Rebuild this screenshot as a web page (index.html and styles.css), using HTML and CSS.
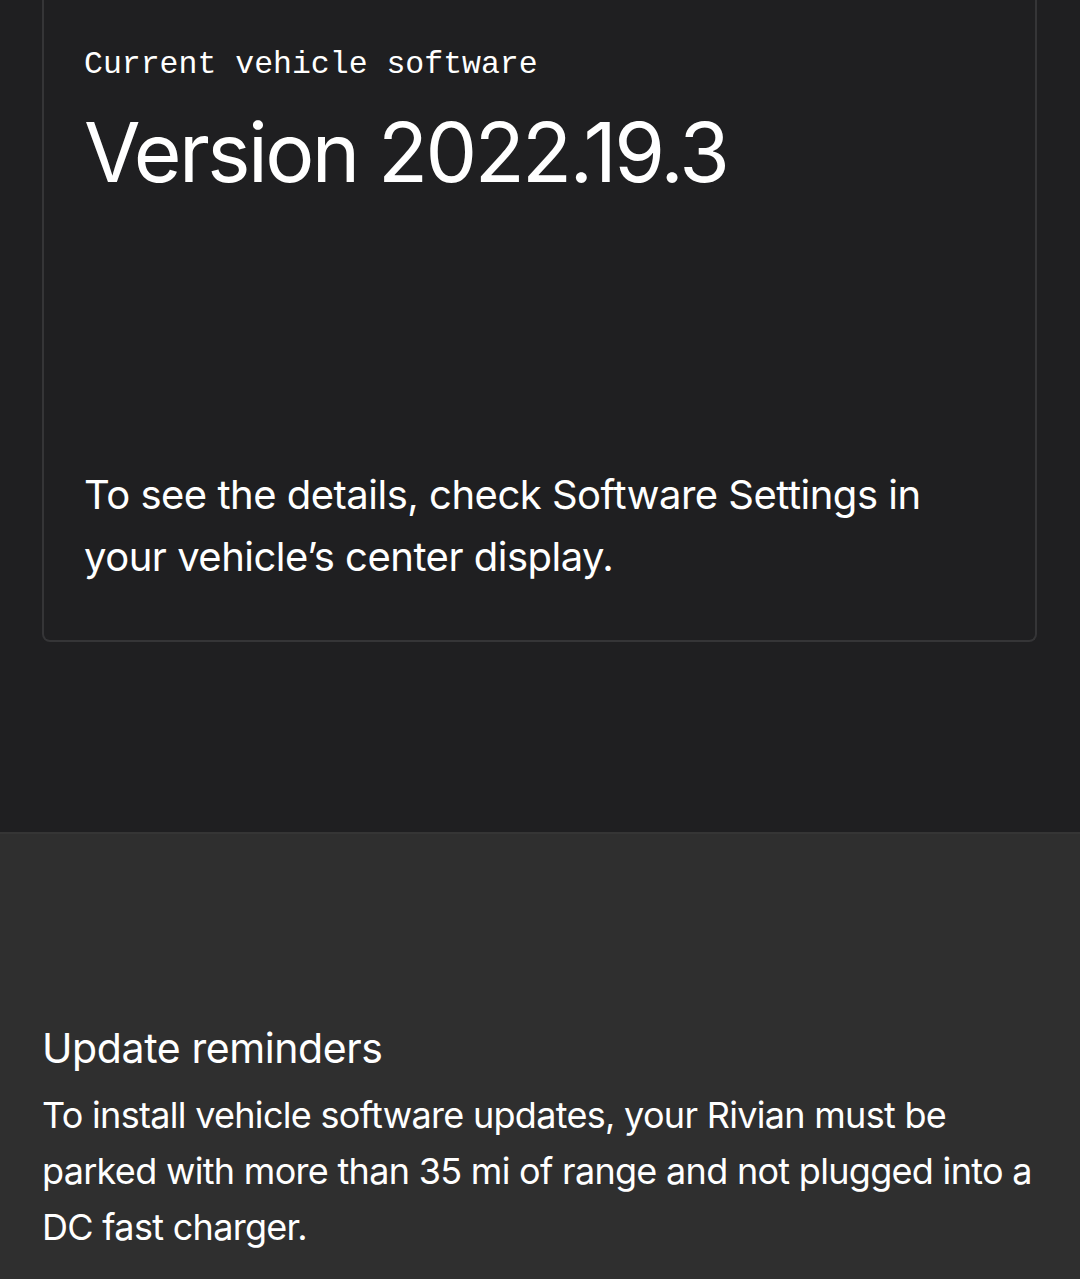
FILE: index.html
```html
<!DOCTYPE html>
<html>
    <head>
        <title>Vehicle software</title>
        <link rel="stylesheet" href="styles.css">
    </head>
    <body>
        <div class="top">
            <div class="card">
                <div class="label">Current vehicle software</div>
                <h1 class="version">Version 2022.19.3</h1>
                <p class="note">To see the details, check Software Settings in your vehicle’s center display.</p>
            </div>
        </div>
        <div class="bottom">
            <h2>Update reminders</h2>
            <p>To install vehicle software updates, your Rivian must be parked with more than 35 mi of range and not plugged into a DC fast charger.</p>
        </div>
    </body>
</html>
```
FILE: styles.css
```css
body {
    margin: 0;
    background: #1f1f21;
    color: #fff;
    font-family: Inter, "Liberation Sans", sans-serif;
}
.top {
    height: 832px;
    padding: 0 43px 0 42px;
    box-sizing: border-box;
}
.card {
    border: 2px solid #353537;
    border-top: none;
    border-radius: 0 0 8px 8px;
    padding: 43px 40px 40px 40px;
    height: 642px;
    box-sizing: border-box;
}
.label {
    font-family: "Liberation Mono", monospace;
    font-size: 31.5px;
    line-height: 40px;
    margin-top: 2px;
}
.version {
    font-size: 82px;
    font-weight: 400;
    letter-spacing: -2.6px;
    line-height: 100px;
    margin: 18px 0 0;
}
.note {
    font-size: 40px;
    line-height: 62px;
    letter-spacing: -0.5px;
    margin: 261px 0 0;
}
.bottom {
    background: #2f2f2f;
    border-top: 2px solid #353535;
    padding: 186px 42px 20px;
    min-height: 447px;
    box-sizing: border-box;
}
.bottom h2 {
    font-size: 41px;
    font-weight: 400;
    line-height: 56px;
    margin: 0;
    letter-spacing: -0.4px;
}
.bottom p {
    font-size: 36px;
    line-height: 56px;
    letter-spacing: -0.7px;
    margin: 11px 0 0;
}
```
